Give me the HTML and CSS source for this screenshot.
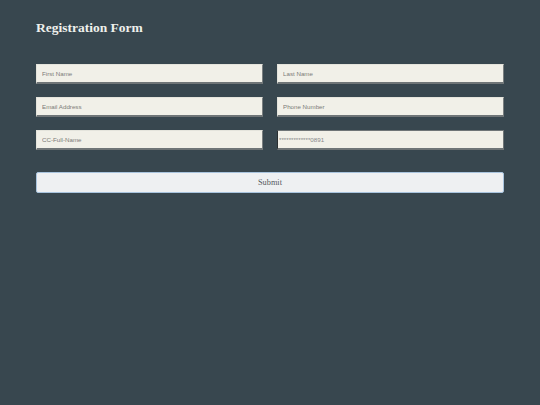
FILE: index.html
```html
<!DOCTYPE html>
<html lang="en">
<head>
<meta charset="utf-8">
<title>Registration Form</title>
<link rel="stylesheet" href="styles.css">
</head>
<body>
<div class="page">
  <h1 class="title">Registration Form</h1>
  <form class="form">
    <div class="grid">
      <input class="field" type="text" placeholder="First Name">
      <input class="field" type="text" placeholder="Last Name">
      <input class="field" type="text" placeholder="Email Address">
      <input class="field" type="text" placeholder="Phone Number">
      <input class="field" type="text" placeholder="CC-Full-Name">
      <input class="field field-cc" type="text" value="*************0891">
    </div>
    <button class="submit" type="button">Submit</button>
  </form>
</div>
</body>
</html>
```

FILE: styles.css
```css
html, body {
  margin: 0;
  padding: 0;
  background: #38474f;
  height: 100%;
}
.page {
  padding: 19px 36px 0 36px;
}
.title {
  margin: 0;
  font-family: "Liberation Serif", "Times New Roman", serif;
  font-weight: bold;
  font-size: 13.5px;
  line-height: 18px;
  color: #eef0ec;
}
.form {
  margin-top: 27px;
}
.grid {
  display: grid;
  grid-template-columns: 1fr 1fr;
  column-gap: 14px;
  row-gap: 13px;
}
.field {
  box-sizing: border-box;
  height: 20px;
  margin: 0;
  padding: 0 5px;
  background: #f1f0e8;
  border: 1px solid #e4e4dc;
  border-right-color: #7a7f80;
  border-bottom: 2px solid #6f7577;
  font-family: "Liberation Sans", Arial, sans-serif;
  font-size: 6.2px;
  color: #777;
  outline: none;
}
.field::placeholder {
  color: #7c7c78;
}
.field-cc {
  padding-left: 1px;
  border: 1px solid #6f7577;
  border-left: 1px solid #2a2f31;
  border-bottom-width: 2px;
  color: #888;
}
.submit {
  display: block;
  box-sizing: border-box;
  width: 100%;
  height: 21px;
  margin-top: 22px;
  padding: 0;
  background: #eef0f2;
  border: 1px solid #a9c4de;
  border-radius: 2px;
  font-family: "Liberation Serif", "Times New Roman", serif;
  font-size: 8.3px;
  color: #555a5e;
}
```
